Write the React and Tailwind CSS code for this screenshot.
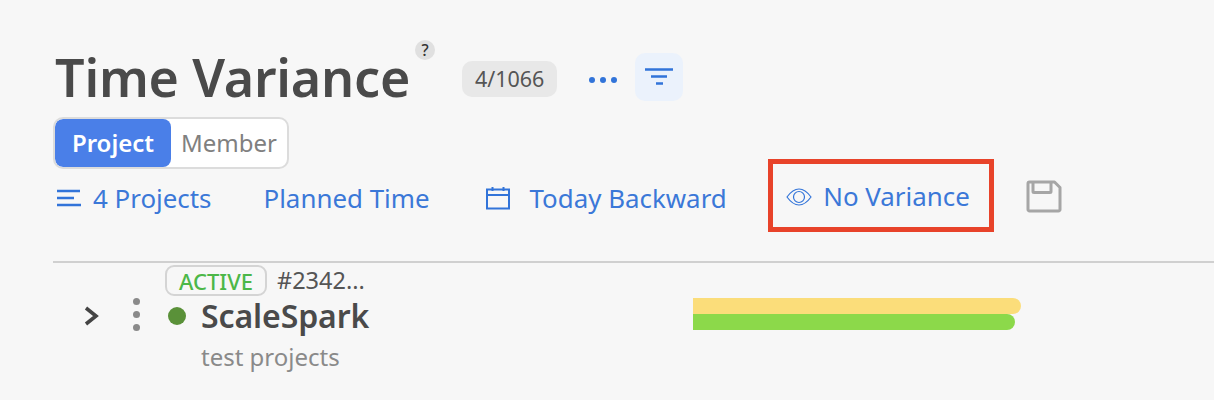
const blue = "text-[#3b78d8]";

function Lines() {
  return (
    <svg width="24" height="20" viewBox="0 0 24 20" className="shrink-0">
      <path d="M0 3h23M0 10h17M0 17h24" stroke="#3274d9" strokeWidth="2.4" fill="none" />
    </svg>
  );
}

function Calendar() {
  return (
    <svg width="26" height="26" viewBox="0 0 26 26" className="shrink-0">
      <path d="M2 4.500h22v19H2zM2 10h22M7.500 2v4M18.500 2v4" stroke="#3274d9" strokeWidth="2" fill="none" />
    </svg>
  );
}

function Funnel() {
  return (
    <svg width="28" height="18" viewBox="0 0 28 18">
      <path d="M0 1.500h28M6 8.500h16M11 15.500h7" stroke="#3274d9" strokeWidth="2.600" fill="none" />
    </svg>
  );
}

function EyeIcon() {
  return (
    <svg width="28" height="20" viewBox="0 0 28 20" className="shrink-0">
      <path d="M2 10C6 4.500 10 2 14 2s8 2.500 12 8c-4 5.500-8 8-12 8s-8-2.500-12-8z" stroke="#3274d9" strokeWidth="1.200" fill="none" />
      <circle cx="14" cy="10" r="5.500" stroke="#3274d9" strokeWidth="1.200" fill="none" />
    </svg>
  );
}

function SaveIcon() {
  return (
    <svg width="36" height="33" viewBox="0 0 36 33">
      <path
        d="M2 3.500a1.500 1.500 0 0 1 1.500-1.500h25l5.500 5.500v22a1.500 1.500 0 0 1-1.500 1.500h-29a1.500 1.500 0 0 1-1.500-1.500zM7 2v9.500a1 1 0 0 0 1 1h16a1 1 0 0 0 1-1V2"
        stroke="#a6a6a6"
        strokeWidth="3"
        fill="none"
        strokeLinejoin="round"
      />
    </svg>
  );
}

export default function App() {
  return (
    <div className="h-[400px] overflow-hidden bg-[#f7f7f7] pl-[53px] pt-[44px] font-['Noto_Sans','Open_Sans',sans-serif]">
      <div className="flex h-[66px] items-center pl-[2px]">
        <div className="relative">
          <h1 className="text-[52px] leading-[66px] font-semibold tracking-[-0.2px] text-[#4a4a4a]">Time Variance</h1>
          <span className="absolute top-[-4px] right-[-25px] flex h-[20px] w-[20px] items-center justify-center rounded-full bg-[#e0e0e0] text-[16px] font-medium text-[#333]">
            ?
          </span>
        </div>
        <span className="mt-[4px] ml-[52px] flex h-[36px] w-[95px] items-center justify-center rounded-[10px] bg-[#e8e8e8] text-[21.500px] text-[#555]">
          4/1066
        </span>
        <div className="mt-[6px] ml-[32px] flex gap-[5px]">
          <span className="h-[6px] w-[6px] rounded-full bg-[#3274d9]" />
          <span className="h-[6px] w-[6px] rounded-full bg-[#3274d9]" />
          <span className="h-[6px] w-[6px] rounded-full bg-[#3274d9]" />
        </div>
        <button className="ml-[18px] flex h-[48px] w-[48px] items-center justify-center rounded-[10px] bg-[#ebf2fc]">
          <Funnel />
        </button>
      </div>

      <div className="mt-[7px] flex h-[52px] w-[236px] overflow-hidden rounded-[10px] border-2 border-[#dcdcdc] bg-white text-[24px]">
        <div className="flex w-[116px] items-center justify-center rounded-[8px] bg-[#4a7fe8] font-semibold text-white">
          Project
        </div>
        <div className="flex flex-1 items-center justify-center text-[#808080]">Member</div>
      </div>

      <div className={`mt-[5px] flex h-[48px] items-center text-[25.900px] ${blue}`}>
        <div className="ml-[4px] flex items-center gap-[12px]">
          <Lines />
          <span>4 Projects</span>
        </div>
        <span className="ml-[52px]">Planned Time</span>
        <div className="ml-[55px] flex items-center gap-[19px]">
          <Calendar />
          <span>Today Backward</span>
        </div>
        <div className="mb-[6px] ml-[41.500px] flex h-[73px] w-[226px] items-center gap-[10px] border-[5px] border-[#e8432a] pt-[3px] pl-[12px]">
          <EyeIcon />
          <span>No Variance</span>
        </div>
        <div className="mb-[4px] ml-[32px]">
          <SaveIcon />
        </div>
      </div>

      <div className="mt-[39px] h-[2px] bg-[#d0d0d0]" />

      <div className="flex items-start pt-[2px]">
        <svg width="16" height="22" viewBox="0 0 16 22" className="mt-[40px] ml-[31px] shrink-0">
          <path d="M2 3l10 8-10 8" stroke="#444" strokeWidth="3.600" fill="none" />
        </svg>
        <div className="mt-[33px] ml-[33px] flex w-[8px] flex-col gap-[6px]">
          <span className="h-[7px] w-[7px] rounded-full bg-[#8a8a8a]" />
          <span className="h-[7px] w-[7px] rounded-full bg-[#8a8a8a]" />
          <span className="h-[7px] w-[7px] rounded-full bg-[#8a8a8a]" />
        </div>
        <div className="ml-[24px] w-[290px] shrink-0">
          <div className="flex items-center">
            <span className="flex h-[31px] w-[102px] items-center justify-center rounded-[9px] border-2 border-[#d4d4d4] text-[22px] leading-none font-medium text-[#4cb748]">
              ACTIVE
            </span>
            <span className="ml-[10px] text-[23.500px] leading-[31px] text-[#555]">#2342...</span>
          </div>
          <div className="flex items-center gap-[15px] pl-[3px]">
            <span className="h-[18px] w-[18px] shrink-0 rounded-full bg-[#5a9139]" />
            <span className="text-[32px] leading-[40px] font-semibold tracking-[-0.1px] text-[#4a4a4a]">ScaleSpark</span>
          </div>
          <div className="mt-[5px] ml-[36px] text-[24px] leading-[32px] text-[#8a8a8a]">test projects</div>
        </div>
        <div className="mt-[33px] ml-[238px] w-[328px]">
          <div className="h-[16px] rounded-r-full bg-[#fbdd7a]" />
          <div className="h-[16px] w-[322px] rounded-r-full bg-[#8cd94a]" />
        </div>
      </div>
    </div>
  );
}
